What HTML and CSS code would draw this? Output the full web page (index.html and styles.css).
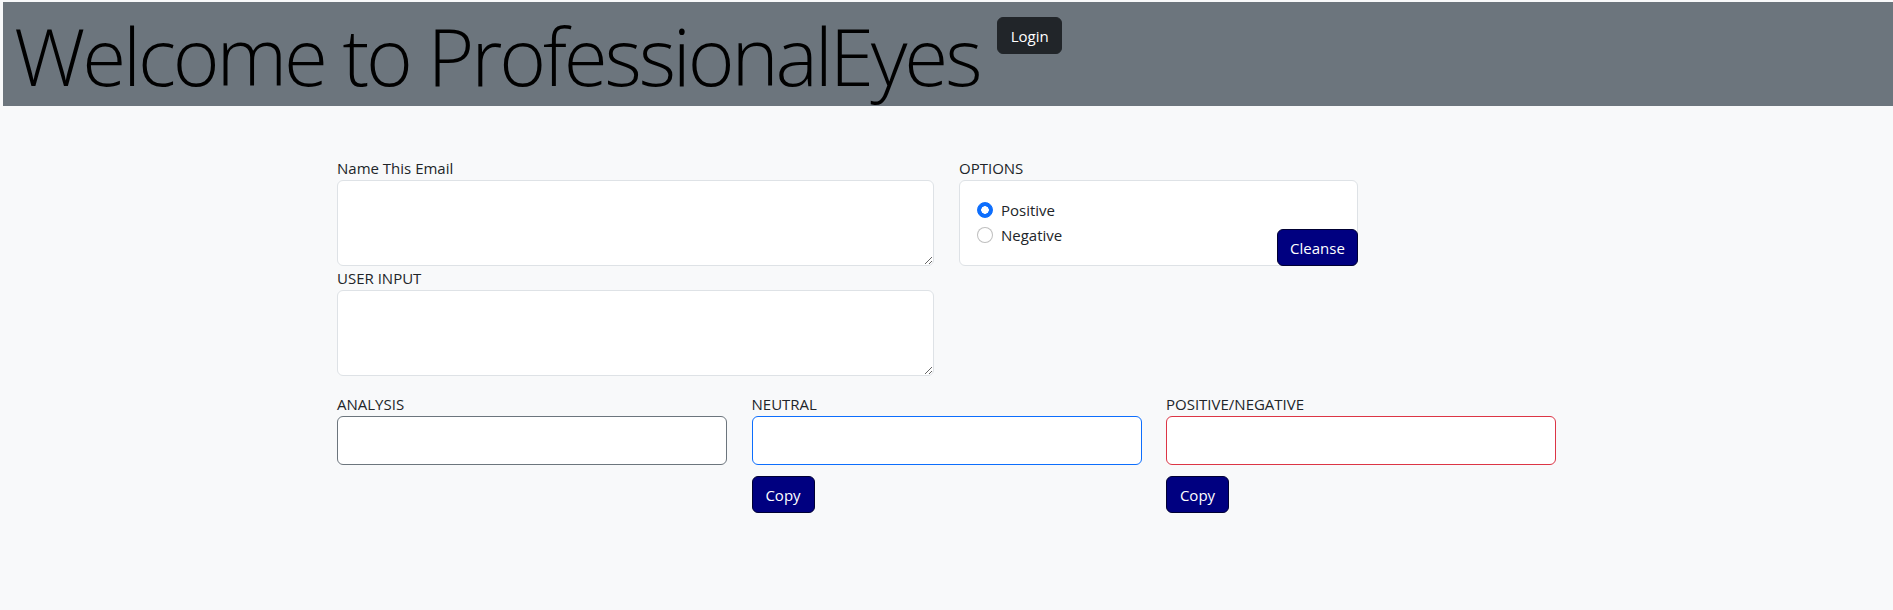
FILE: index.html
```html
<!DOCTYPE html>
<html lang="en">
<head>
<meta charset="utf-8">
<title>ProfessionalEyes</title>
<link rel="stylesheet" href="styles.css">
</head>
<body>
<header class="topbar">
  <h1 class="title">Welcome to ProfessionalEyes</h1>
  <button class="btn btn-dark" type="button">Login</button>
</header>
<main class="container">
  <div class="row-top">
    <div class="col-inputs">
      <label class="field-label" for="name">Name This Email</label>
      <textarea id="name" class="text-area" rows="3"></textarea>
      <label class="field-label" for="userinput">USER INPUT</label>
      <textarea id="userinput" class="text-area" rows="3"></textarea>
    </div>
    <div class="col-options">
      <div class="field-label">OPTIONS</div>
      <div class="options-box">
        <label class="check"><input class="radio" type="radio" name="tone" checked><span>Positive</span></label>
        <label class="check"><input class="radio" type="radio" name="tone"><span>Negative</span></label>
        <button class="btn btn-navy btn-cleanse" type="button">Cleanse</button>
      </div>
    </div>
  </div>
  <div class="row-outputs">
    <div class="out-col">
      <label class="field-label" for="analysis">ANALYSIS</label>
      <input id="analysis" class="out-input border-grey" type="text">
    </div>
    <div class="out-col">
      <label class="field-label" for="neutral">NEUTRAL</label>
      <input id="neutral" class="out-input border-blue" type="text">
      <button class="btn btn-navy btn-copy" type="button">Copy</button>
    </div>
    <div class="out-col">
      <label class="field-label" for="posneg">POSITIVE/NEGATIVE</label>
      <input id="posneg" class="out-input border-red" type="text">
      <button class="btn btn-navy btn-copy" type="button">Copy</button>
    </div>
  </div>
</main>
</body>
</html>
```

FILE: styles.css
```css
* { box-sizing: border-box; }

html, body {
  margin: 0;
  padding: 0;
}

body {
  background: #f8f9fa;
  color: #212529;
  font-family: "Open Sans", "Noto Sans", sans-serif;
  font-size: 15px;
  line-height: 24px;
  min-height: 610px;
}

.topbar {
  margin: 2px 0 0 3px;
  height: 104px;
  background: #6c757d;
  display: flex;
  align-items: flex-start;
}

.title {
  margin: 0 0 0 11px;
  padding-top: 5px;
  font-family: "Open Sans", sans-serif;
  font-weight: 300;
  font-size: 80px;
  line-height: 96px;
  color: #000;
  letter-spacing: -3.15px;
}

.btn {
  font-family: "Open Sans", "Noto Sans", sans-serif;
  font-size: 15px;
  line-height: 24px;
  padding: 6px 12px;
  height: 37px;
  border-radius: 6px;
  color: #fff;
  cursor: pointer;
}

.btn-dark {
  margin: 15px 0 0 18px;
  width: 65px;
  padding: 6px 0;
  background: #212529;
  border: 1px solid #212529;
}

.btn-navy {
  background: #000080;
  border: 1px solid #000033;
}

.container {
  width: 1219px;
  margin: 50px auto 0;
}

.row-top {
  display: flex;
  gap: 25px;
  align-items: flex-start;
}

.col-inputs {
  width: 597px;
  display: flex;
  flex-direction: column;
}

.col-options {
  width: 399px;
}

.field-label {
  display: block;
  height: 24px;
  line-height: 24px;
  font-size: 15px;
}

.text-area {
  display: block;
  width: 100%;
  height: 86px;
  margin: 0;
  padding: 6px 12px;
  background: #fff;
  border: 1px solid #dee2e6;
  border-radius: 6px;
  font: inherit;
  resize: vertical;
}

.options-box {
  position: relative;
  height: 86px;
  background: #fff;
  border: 1px solid #dee2e6;
  border-radius: 6px;
  padding: 16px 0 0 17px;
}

.check {
  display: flex;
  align-items: center;
  gap: 8px;
  height: 25px;
}

.radio {
  appearance: none;
  -webkit-appearance: none;
  margin: 0;
  width: 16px;
  height: 16px;
  border-radius: 50%;
  border: 1px solid rgba(0, 0, 0, 0.25);
  background: #fff;
}

.radio:checked {
  border-color: #0d6efd;
  background: radial-gradient(circle, #fff 0 3.5px, #0d6efd 4px);
}

.btn-cleanse {
  position: absolute;
  right: -1px;
  bottom: -1px;
  width: 81px;
  padding: 6px 0;
}

.row-outputs {
  margin-top: 16px;
  display: grid;
  grid-template-columns: repeat(3, 1fr);
  column-gap: 24.5px;
}

.out-col {
  display: flex;
  flex-direction: column;
  align-items: flex-start;
}

.out-input {
  display: block;
  width: 100%;
  height: 49px;
  margin: 0;
  padding: 8px 16px;
  background: #fff;
  border: 1px solid #6c757d;
  border-radius: 6px;
  font: inherit;
  font-size: 20px;
}

.border-grey { border-color: #6c757d; }
.border-blue { border-color: #0d6efd; }
.border-red { border-color: #dc3545; }

.btn-copy {
  margin-top: 11px;
  width: 63px;
  padding: 6px 0;
}
```
